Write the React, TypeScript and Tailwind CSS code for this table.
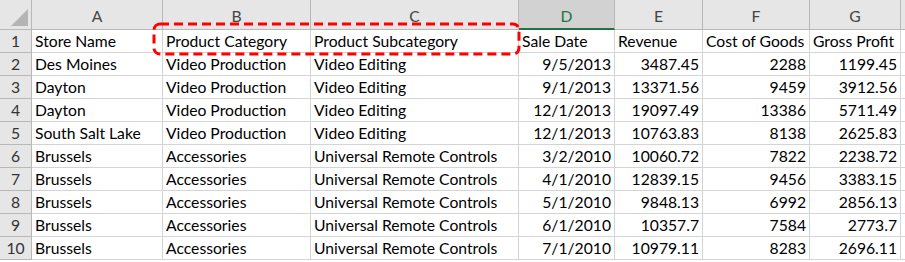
import React from 'react'

type Row = [string, string, string, string, string, string, string]

const rows: Row[] = [
  ['Store Name', 'Product Category', 'Product Subcategory', 'Sale Date', 'Revenue', 'Cost of Goods', 'Gross Profit'],
  ['Des Moines', 'Video Production', 'Video Editing', '9/5/2013', '3487.45', '2288', '1199.45'],
  ['Dayton', 'Video Production', 'Video Editing', '9/1/2013', '13371.56', '9459', '3912.56'],
  ['Dayton', 'Video Production', 'Video Editing', '12/1/2013', '19097.49', '13386', '5711.49'],
  ['South Salt Lake', 'Video Production', 'Video Editing', '12/1/2013', '10763.83', '8138', '2625.83'],
  ['Brussels', 'Accessories', 'Universal Remote Controls', '3/2/2010', '10060.72', '7822', '2238.72'],
  ['Brussels', 'Accessories', 'Universal Remote Controls', '4/1/2010', '12839.15', '9456', '3383.15'],
  ['Brussels', 'Accessories', 'Universal Remote Controls', '5/1/2010', '9848.13', '6992', '2856.13'],
  ['Brussels', 'Accessories', 'Universal Remote Controls', '6/1/2010', '10357.7', '7584', '2773.7'],
  ['Brussels', 'Accessories', 'Universal Remote Controls', '7/1/2010', '10979.11', '8283', '2696.11'],
]

const columns = ['A', 'B', 'C', 'D', 'E', 'F', 'G']
const gridCols = 'grid grid-cols-[32px_131px_148px_208px_96px_88px_107px_91px_1fr]'

export default function App() {
  return (
    <div className="relative h-[262px] w-[905px] overflow-hidden bg-white font-['Lato',sans-serif] text-[15.7px] text-black">
      {/* column headers */}
      <div className={`${gridCols} h-[30px] bg-[#e6e6e6] text-[#444]`}>
        <div className="relative border-r border-b border-[#b8b8b8]">
          <div className="absolute right-[3px] bottom-[3px] h-0 w-0 [border-bottom:17px_solid_#b4b4b4] [border-left:17px_solid_transparent]" />
        </div>
        {columns.map((c) =>
          c === 'D' ? (
            <div
              key={c}
              className="flex items-end justify-center border-r border-b-2 border-r-[#b8b8b8] border-b-[#217346] bg-[#d2d2d2] pb-[2px] leading-[20px] text-[#217346]"
            >
              {c}
            </div>
          ) : (
            <div key={c} className="flex items-end justify-center border-r border-b border-[#b8b8b8] pb-[3px] leading-[20px]">
              {c}
            </div>
          )
        )}
        <div className="border-b border-[#b8b8b8]" />
      </div>

      {rows.map((row, i) => (
        <div key={i} className={`${gridCols} h-[23px] leading-[22px]`}>
          <div className="border-r border-b border-[#b8b8b8] bg-[#e6e6e6] text-center text-[#333]">{i + 1}</div>
          {row.map((cell, j) => {
            const right = i > 0 && j >= 3
            return (
              <div
                key={j}
                className={`overflow-hidden whitespace-nowrap border-r border-b border-[#d4d4d4] ${
                  right ? 'pr-[3px] text-right' : 'pl-[3px]'
                }`}
              >
                {cell}
              </div>
            )
          })}
          <div className="border-b border-[#d4d4d4]" />
        </div>
      ))}

      {/* highlight annotation */}
      <svg className="absolute top-[22px] left-[152px]" width="370" height="34" viewBox="0 0 370 34">
        <rect
          x="2"
          y="2"
          width="365"
          height="30"
          rx="6"
          fill="none"
          stroke="#ff0000"
          strokeWidth="3"
          strokeDasharray="9 5"
        />
      </svg>
    </div>
  )
}
